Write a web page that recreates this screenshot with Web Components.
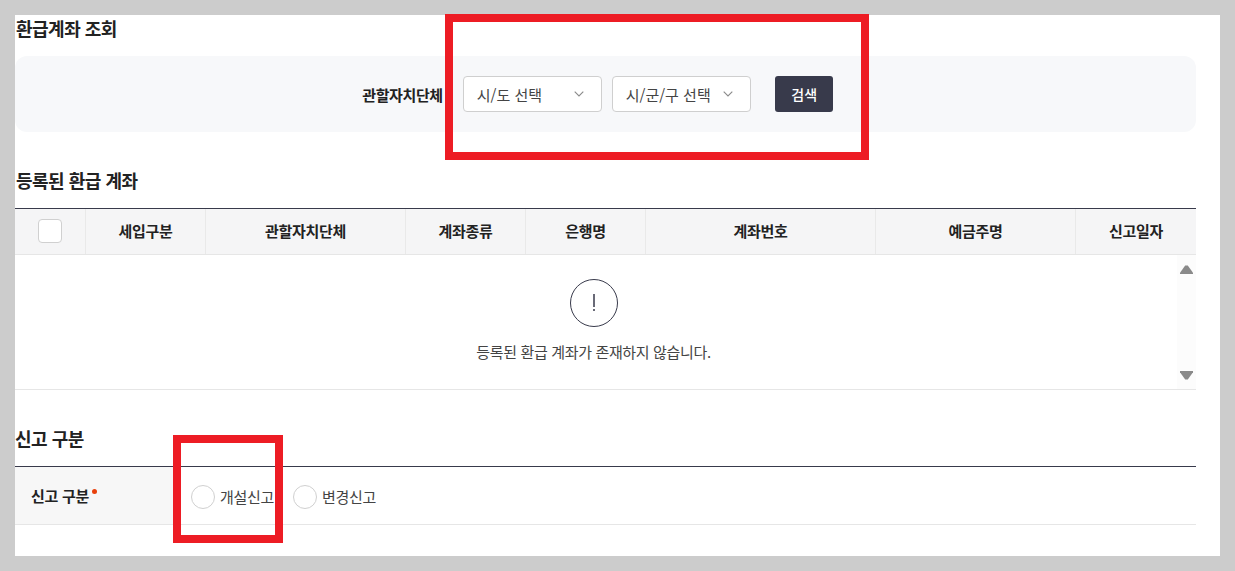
<!DOCTYPE html>
<html lang="ko">
<head>
<meta charset="utf-8">
<title>환급계좌 조회</title>
<style>
  html, body { margin: 0; height: 100%; }
  body {
    background: #cccccc;
    font-family: "Noto Sans CJK KR", "Noto Sans", sans-serif;
    color: #222;
    overflow: hidden;
  }
</style>
</head>
<body>
<refund-page>
  <section-title>환급계좌 조회</section-title>
  <search-box label="관할자치단체">
    <select-box style="margin-right:10px">시/도 선택</select-box>
    <select-box>시/군/구 선택</select-box>
    <dark-button>검색</dark-button>
  </search-box>
  <section-title class="second">등록된 환급 계좌</section-title>
  <account-table message="등록된 환급 계좌가 존재하지 않습니다."></account-table>
  <section-title class="third">신고 구분</section-title>
  <report-row label="신고 구분">
    <radio-option>개설신고</radio-option>
    <radio-option>변경신고</radio-option>
  </report-row>
  <red-mark style="left:445px;top:14px;width:424px;height:146px"></red-mark>
  <red-mark style="left:173px;top:435px;width:110px;height:108px"></red-mark>
</refund-page>

<script>
class RefundPage extends HTMLElement {
  constructor() {
    super();
    const shadow = this.attachShadow({ mode: 'open' });
    shadow.innerHTML = `
      <style>
        :host {
          display: block;
          box-sizing: border-box;
          margin: 15px 0 0 15px;
          width: 1205px;
          height: 541px;
          padding-right: 24px;
          background: #fff;
        }
        ::slotted(.second) { margin-top: 35px; }
        ::slotted(.third) { margin-top: 35px; padding-left: 0; }
      </style>
      <slot></slot>
    `;
  }
}

class SectionTitle extends HTMLElement {
  constructor() {
    super();
    const shadow = this.attachShadow({ mode: 'open' });
    shadow.innerHTML = `
      <style>
        :host {
          display: block;
          height: 26px;
          line-height: 26px;
          padding-left: 1px;
          font-size: 18px;
          font-weight: 700;
          color: #222;
          letter-spacing: -0.5px;
        }
      </style>
      <slot></slot>
    `;
  }
}

class SearchBox extends HTMLElement {
  constructor() {
    super();
    const shadow = this.attachShadow({ mode: 'open' });
    shadow.innerHTML = `
      <style>
        :host {
          display: flex;
          align-items: center;
          justify-content: center;
          height: 76px;
          margin-top: 15px;
          padding-right: 16px;
          background: #f7f8fa;
          border-radius: 12px;
          font-size: 15px;
        }
        .label { font-weight: 700; color: #222; margin-right: 20px; letter-spacing: -0.4px; }
      </style>
      <span class="label"></span>
      <slot></slot>
    `;
    shadow.querySelector('.label').textContent = this.getAttribute('label');
  }
}

class SelectBox extends HTMLElement {
  constructor() {
    super();
    const shadow = this.attachShadow({ mode: 'open' });
    shadow.innerHTML = `
      <style>
        :host {
          display: flex;
          align-items: center;
          justify-content: space-between;
          box-sizing: border-box;
          width: 139px;
          height: 36px;
          padding: 0 17px 0 13px;
          background: #fff;
          border: 1px solid #cfcfcf;
          border-radius: 4px;
          font-size: 15px;
          color: #444;
        }
        svg { display: block; flex: none; }
      </style>
      <slot></slot>
      <svg width="10" height="6" viewBox="0 0 10 6"><path d="M.7.7 5 5 9.3.7" fill="none" stroke="#8a8a8a" stroke-width="1.1"/></svg>
    `;
  }
}

class DarkButton extends HTMLElement {
  constructor() {
    super();
    const shadow = this.attachShadow({ mode: 'open' });
    shadow.innerHTML = `
      <style>
        :host {
          display: flex;
          align-items: center;
          justify-content: center;
          width: 58px;
          height: 36px;
          margin-left: 24px;
          padding-left: 1px;
          box-sizing: border-box;
          background: #383a4b;
          border-radius: 3px;
          color: #fff;
          font-size: 14px;
          font-weight: 500;
        }
      </style>
      <slot></slot>
    `;
  }
}

class AccountTable extends HTMLElement {
  constructor() {
    super();
    const shadow = this.attachShadow({ mode: 'open' });
    const heads = ['세입구분', '관할자치단체', '계좌종류', '은행명', '계좌번호', '예금주명', '신고일자'];
    shadow.innerHTML = `
      <style>
        :host {
          display: block;
          margin-top: 15px;
          border-top: 1px solid #383a4b;
          border-bottom: 1px solid #e6e6e6;
        }
        .head {
          display: grid;
          grid-template-columns: 70px 120px 200px 120px 120px 230px 200px 1fr;
          height: 45px;
          background: #f5f5f6;
          border-bottom: 1px solid #e6e6e6;
        }
        .cell {
          display: flex;
          align-items: center;
          justify-content: center;
          padding-bottom: 2px;
          border-left: 1px solid #e9e9e9;
          font-size: 15px;
          font-weight: 700;
          letter-spacing: -0.3px;
          color: #222;
        }
        .cell:first-child { border-left: 0; padding-bottom: 1px; }
        .check {
          width: 24px;
          height: 24px;
          box-sizing: border-box;
          background: #fff;
          border: 1px solid #d0d0d0;
          border-radius: 4px;
        }
        .body {
          display: flex;
          height: 134px;
        }
        .empty {
          flex: 1;
          display: flex;
          flex-direction: column;
          align-items: center;
          padding: 24px 5px 0 0;
          box-sizing: border-box;
        }
        .empty svg { display: block; }
        .empty p {
          margin: 15px 0 0;
          font-size: 15px;
          letter-spacing: -0.35px;
          line-height: 20px;
          color: #444;
        }
        .bar {
          flex: none;
          width: 19px;
          display: flex;
          flex-direction: column;
          justify-content: space-between;
          align-items: center;
          padding: 10px 0 9px;
          box-sizing: border-box;
          background: #fcfcfc;
        }
        .bar svg { display: block; }
      </style>
      <div class="head">
        <div class="cell"><span class="check"></span></div>
        ${heads.map(h => `<div class="cell">${h}</div>`).join('')}
      </div>
      <div class="body">
        <div class="empty">
          <svg width="48" height="48" viewBox="0 0 48 48">
            <circle cx="24" cy="24" r="23.5" fill="none" stroke="#383a4b" stroke-width="1"/>
            <path d="M24 15v13M24 30v2" stroke="#383a4b" stroke-width="1.5" fill="none"/>
          </svg>
          <p></p>
        </div>
        <div class="bar">
          <svg width="13" height="9" viewBox="0 0 13 9"><path d="M5.2.4H7.8L13 7.8V9H0V7.8Z" fill="#8a8a8a"/></svg>
          <svg width="13" height="9" viewBox="0 0 13 9"><path d="M5.2 8.6H7.8L13 1.2V0H0V1.2Z" fill="#8a8a8a"/></svg>
        </div>
      </div>
    `;
    shadow.querySelector('p').textContent = this.getAttribute('message');
  }
}

class ReportRow extends HTMLElement {
  constructor() {
    super();
    const shadow = this.attachShadow({ mode: 'open' });
    shadow.innerHTML = `
      <style>
        :host {
          display: flex;
          height: 57px;
          margin-top: 15px;
          border-top: 1px solid #383a4b;
          border-bottom: 1px solid #e6e6e6;
        }
        .label {
          flex: none;
          width: 160px;
          box-sizing: border-box;
          padding-left: 16px;
          display: flex;
          align-items: center;
          background: #f7f7f7;
          font-size: 15px;
          font-weight: 700;
          letter-spacing: -0.3px;
          color: #222;
        }
        .dot {
          width: 5px;
          height: 5px;
          margin: -8px 0 0 3px;
          border-radius: 50%;
          background: #e8400c;
        }
        .options {
          flex: 1;
          display: flex;
          align-items: center;
          gap: 19px;
          padding: 2px 0 0 16px;
        }
      </style>
      <div class="label"><span></span><i class="dot"></i></div>
      <div class="options"><slot></slot></div>
    `;
    shadow.querySelector('span').textContent = this.getAttribute('label');
  }
}

class RadioOption extends HTMLElement {
  constructor() {
    super();
    const shadow = this.attachShadow({ mode: 'open' });
    shadow.innerHTML = `
      <style>
        :host {
          display: flex;
          align-items: center;
          gap: 5px;
          font-size: 15px;
          letter-spacing: -0.3px;
          color: #444;
        }
        .ring {
          width: 24px;
          height: 24px;
          box-sizing: border-box;
          background: #fff;
          border: 1px solid #d0d0d0;
          border-radius: 50%;
        }
      </style>
      <span class="ring"></span>
      <slot></slot>
    `;
  }
}

class RedMark extends HTMLElement {
  constructor() {
    super();
    const shadow = this.attachShadow({ mode: 'open' });
    shadow.innerHTML = `
      <style>
        :host {
          position: absolute;
          box-sizing: border-box;
          border: 8px solid #ed1c24;
          pointer-events: none;
        }
      </style>
    `;
  }
}

customElements.define('refund-page', RefundPage);
customElements.define('section-title', SectionTitle);
customElements.define('search-box', SearchBox);
customElements.define('select-box', SelectBox);
customElements.define('dark-button', DarkButton);
customElements.define('account-table', AccountTable);
customElements.define('report-row', ReportRow);
customElements.define('radio-option', RadioOption);
customElements.define('red-mark', RedMark);
</script>
</body>
</html>
